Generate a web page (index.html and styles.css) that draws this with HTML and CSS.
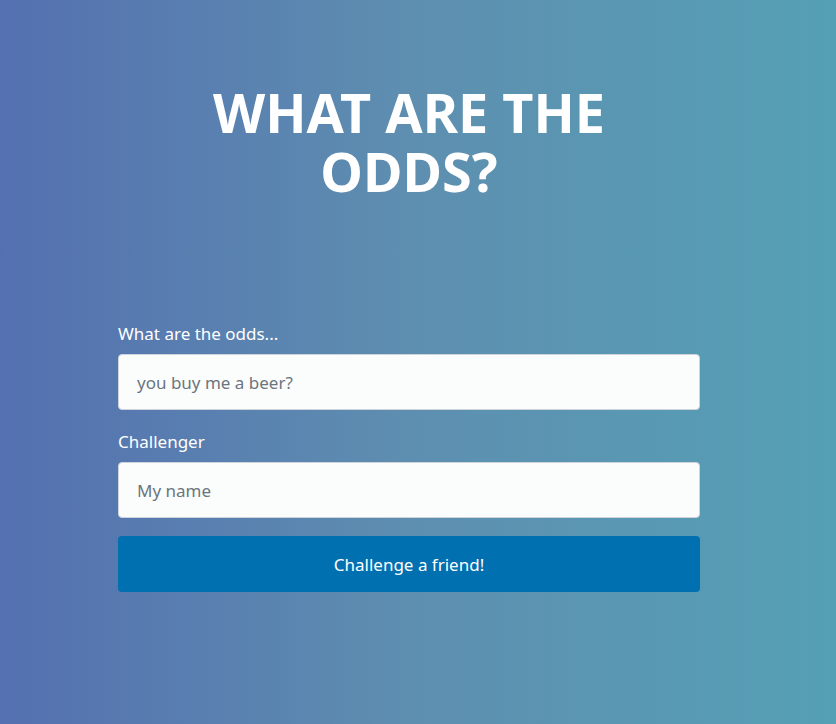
FILE: index.html
```html
<!DOCTYPE html>
<html lang="en">
<head>
<meta charset="utf-8">
<title>What are the odds?</title>
<link rel="stylesheet" href="styles.css">
</head>
<body>
<main class="page">
  <h1 class="title">WHAT ARE THE<br>ODDS?</h1>
  <form class="form">
    <label class="label" for="odds">What are the odds...</label>
    <input class="input" id="odds" type="text" placeholder="you buy me a beer?">
    <label class="label label-gap" for="name">Challenger</label>
    <input class="input" id="name" type="text" placeholder="My name">
    <button class="button" type="button">Challenge a friend!</button>
  </form>
</main>
</body>
</html>
```

FILE: styles.css
```css
html, body {
  margin: 0;
  height: 100%;
}
body {
  background: linear-gradient(to right, #5470b0 0%, #5e8fb0 50%, #55a0b5 100%);
  font-family: "Noto Sans", "Open Sans", "Liberation Sans", sans-serif;
  color: #fff;
}
.page {
  width: 582px;
  margin: 0 auto;
  padding: 83px 18px 0 0;
  display: flex;
  flex-direction: column;
  align-items: stretch;
}
.title {
  margin: 0;
  text-align: center;
  font-size: 54px;
  line-height: 59px;
  font-weight: 700;
  letter-spacing: 0;
}
.form {
  display: flex;
  flex-direction: column;
  margin-top: 121px;
}
.label {
  font-size: 17px;
  line-height: 24px;
  margin-bottom: 8px;
}
.label-gap {
  margin-top: 20px;
}
.input {
  box-sizing: border-box;
  height: 56px;
  padding: 0 18px;
  border: 1px solid #ced4da;
  border-radius: 4px;
  background: #fbfdfd;
  font-family: inherit;
  font-size: 17px;
  color: #495057;
  outline: none;
}
.input::placeholder {
  color: #6c757d;
  opacity: 1;
}
.button {
  margin-top: 18px;
  height: 56px;
  border: 0;
  border-radius: 4px;
  background: #0070b0;
  color: #fff;
  font-family: inherit;
  font-size: 17px;
  cursor: pointer;
}
```
